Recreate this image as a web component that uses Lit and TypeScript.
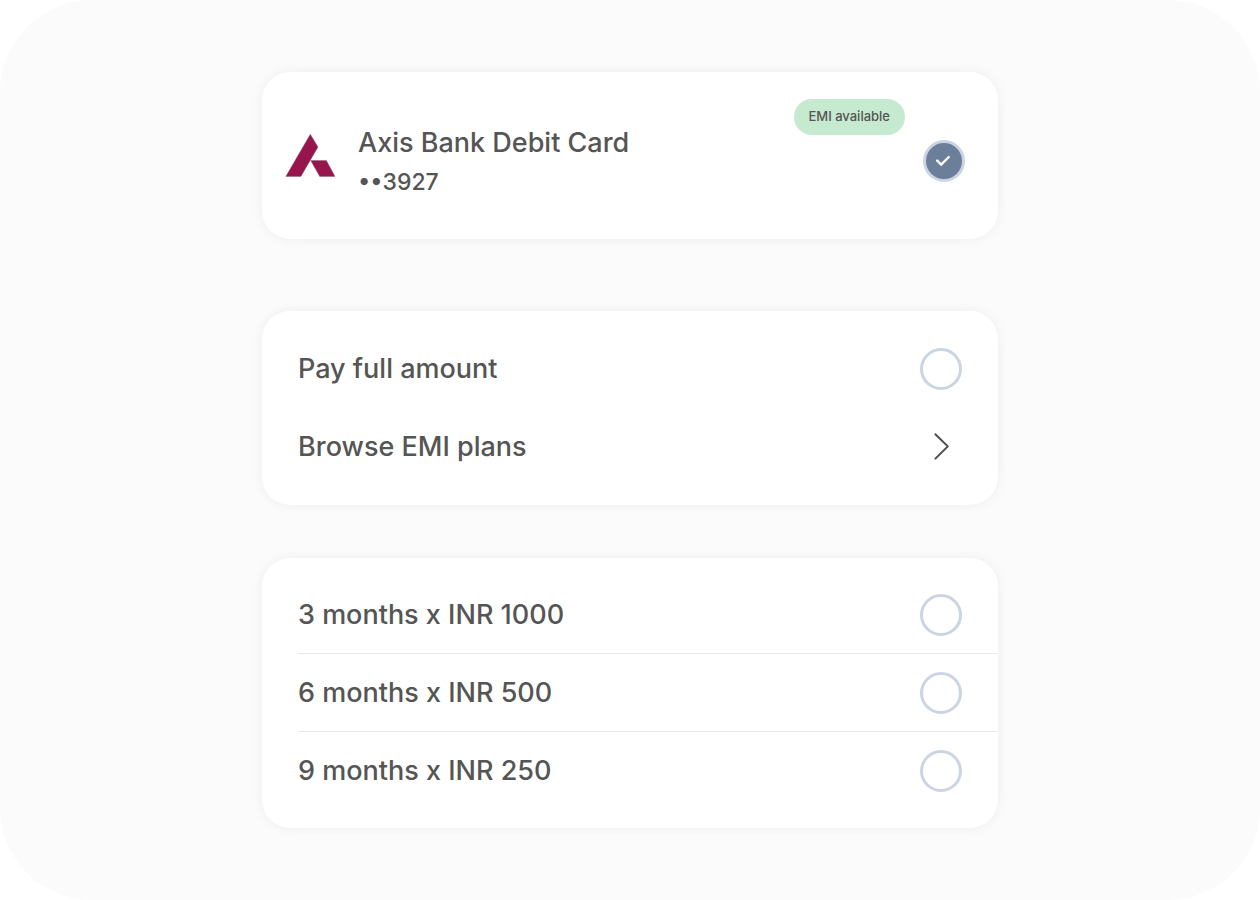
import { LitElement, html, css } from "lit";
import { customElement, state } from "lit/decorators.js";

interface Plan {
  months: number;
  amount: number;
}

const PLANS: Plan[] = [
  { months: 3, amount: 1000 },
  { months: 6, amount: 500 },
  { months: 9, amount: 250 },
];

@customElement("app-root")
export class AppRoot extends LitElement {
  static styles = css`
    :host {
      display: block;
      background: #ffffff;
      color: #555555;
      font-family: Inter, "Liberation Sans", sans-serif;
      font-size: 27px;
      font-weight: 500;
      line-height: 40px;
    }
    * {
      box-sizing: border-box;
    }
    .panel {
      min-height: 100vh;
      padding: 72px 24px;
      background: #fbfbfb;
      border-radius: 92px;
    }
    .stack {
      max-width: 736px;
      margin: 0 auto;
    }
    .card {
      background: #ffffff;
      border-radius: 28px;
      box-shadow: 0 0 12px rgba(0, 0, 0, 0.06);
    }
    .method {
      display: flex;
      align-items: center;
      min-height: 167px;
      padding: 10px 33px 0 18px;
      margin-bottom: 72px;
      cursor: pointer;
    }
    .logo {
      flex: none;
      width: 60px;
      height: 60px;
      margin-right: 18px;
    }
    .details {
      flex: 1;
      display: flex;
      flex-direction: column;
      padding-top: 2px;
    }
    .number {
      font-size: 23px;
      line-height: 38px;
    }
    .badge {
      align-self: flex-start;
      margin: 17px 18px 0 0;
      padding: 0 15px 2px 14px;
      border-radius: 18px;
      background: #c6ead0;
      font-size: 13px;
      line-height: 34px;
      white-space: nowrap;
    }
    .choice {
      flex: none;
      display: grid;
      place-items: center;
    }
    .choice > * {
      grid-area: 1 / 1;
    }
    .radio {
      appearance: none;
      width: 42px;
      height: 42px;
      margin: 0;
      border: 3px solid #cbd4e2;
      border-radius: 50%;
      background: #ffffff;
      cursor: pointer;
    }
    .radio:checked {
      background: #6b7f9b;
    }
    .tick {
      width: 42px;
      height: 42px;
      visibility: hidden;
      pointer-events: none;
    }
    .radio:checked + .tick {
      visibility: visible;
    }
    .options {
      padding: 19px 0;
      margin-bottom: 53px;
    }
    .plans {
      padding: 18px 0;
    }
    .row {
      display: flex;
      align-items: center;
      justify-content: space-between;
      min-height: 78px;
      margin-left: 36px;
      padding-right: 36px;
      cursor: pointer;
    }
    .plans .row:not(:last-child) {
      border-bottom: 1px solid #e8e8e8;
    }
    .browse {
      width: calc(100% - 36px);
      padding-block: 0;
      padding-left: 0;
      border: 0;
      background: none;
      color: inherit;
      font: inherit;
      text-align: left;
    }
    .chevron {
      width: 42px;
      height: 42px;
    }
  `;

  @state() private plan = "";

  private renderRadio(name: string, value: string, checked: boolean) {
    return html`
      <span class="choice">
        <input
          class="radio"
          type="radio"
          id=${value}
          name=${name}
          value=${value}
          .checked=${checked}
          @change=${() => {
            if (name === "plan") this.plan = value;
          }}
        />
        <svg class="tick" viewBox="0 0 42 42" fill="none" aria-hidden="true">
          <path
            d="M14.2 20.6 L18.2 24.6 L25.8 17"
            stroke="#fafaf5"
            stroke-width="2.4"
            stroke-linecap="round"
            stroke-linejoin="miter"
          />
        </svg>
      </span>
    `;
  }

  render() {
    return html`
      <main class="panel">
        <div class="stack">
          <label class="card method" for="axis">
            <svg class="logo" viewBox="0 0 60 60" aria-hidden="true">
              <g fill="#97144d" stroke="#77606c" stroke-width="0.4">
                <path d="M30.3 3.2 L38 16 L20.9 45.4 H5.8 Z" />
                <path d="M30.7 29.5 H46.4 L55 45.4 H39.7 Z" />
              </g>
            </svg>
            <span class="details">
              <span>Axis Bank Debit Card</span>
              <span class="number">••3927</span>
            </span>
            <span class="badge">EMI available</span>
            ${this.renderRadio("method", "axis", true)}
          </label>

          <section class="card options">
            <label class="row" for="full">
              <span>Pay full amount</span>
              ${this.renderRadio("plan", "full", this.plan === "full")}
            </label>
            <button class="row browse" type="button">
              <span>Browse EMI plans</span>
              <svg class="chevron" viewBox="0 0 42 42" fill="none" aria-hidden="true">
                <path
                  d="M15.4 8.2 L27.8 20.4 L15.4 32.6"
                  stroke="#4d4d4f"
                  stroke-width="2"
                  stroke-linecap="round"
                  stroke-linejoin="round"
                />
              </svg>
            </button>
          </section>

          <section class="card plans">
            ${PLANS.map(({ months, amount }) => {
              const id = `months-${months}`;
              return html`
                <label class="row" for=${id}>
                  <span>${months} months x INR ${amount}</span>
                  ${this.renderRadio("plan", id, this.plan === id)}
                </label>
              `;
            })}
          </section>
        </div>
      </main>
    `;
  }
}
